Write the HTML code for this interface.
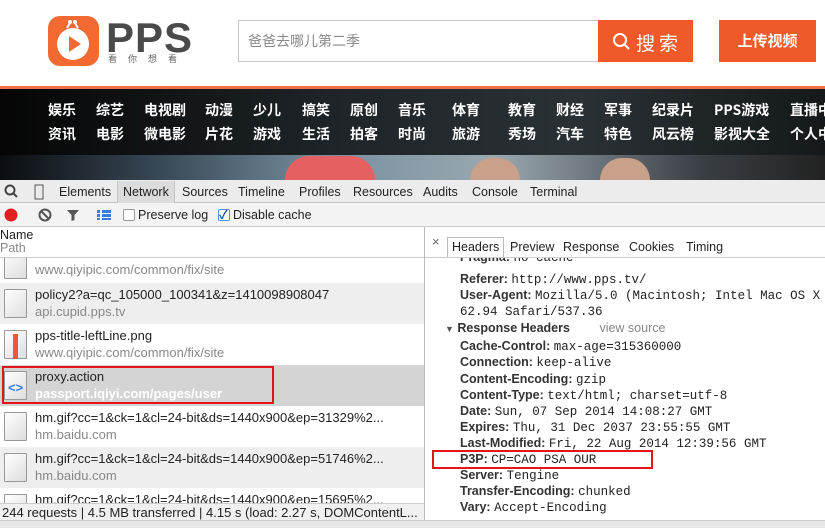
<!DOCTYPE html>
<html><head><meta charset="utf-8"><style>
*{margin:0;padding:0;box-sizing:border-box}
body{width:825px;height:528px;overflow:hidden;background:#fff;font-family:"Liberation Sans","Noto Sans CJK SC",sans-serif;position:relative}
.a{position:absolute}
.nav{position:absolute;left:0;top:89px;width:825px;height:66px;background:linear-gradient(90deg,#050505,#1e2428 40%,#2a3134 70%,#15191b);overflow:hidden}
.nav span{position:absolute;color:#fff;font-weight:bold;font-size:14px;font-family:"Noto Sans CJK SC",sans-serif;white-space:nowrap}
.tb{font-size:12.5px;color:#222}
.row{position:absolute;left:0;width:424px;height:41px;font-size:13px}
.row .t{position:absolute;left:35px;top:4px;color:#222;white-space:nowrap}
.row .p{position:absolute;left:35px;top:21px;color:#888;white-space:nowrap}
.row .ic{position:absolute;left:4px;top:6px;width:23px;height:29px;border:1px solid #999;background:linear-gradient(135deg,#fff,#ddd);border-radius:1px}
.h{position:absolute;left:460px;font-size:12.5px;white-space:nowrap;color:#222}
.h b{color:#333}
.h m{font-family:"Liberation Mono",monospace;font-size:12.5px}
</style></head><body>
<svg class="a" style="left:48px;top:14px" width="52" height="54"><rect x="0" y="2" width="51" height="50" rx="12" fill="#f26a32"/><circle cx="25" cy="30" r="16" fill="#fff"/><path d="M21 22 L33 30 L21 38Z" fill="#f26a32"/><line x1="19" y1="14" x2="22" y2="9" stroke="#fff" stroke-width="2"/><line x1="30" y1="14" x2="27" y2="9" stroke="#fff" stroke-width="2"/><circle cx="22" cy="8" r="2" fill="#fff"/><circle cx="27" cy="8" r="2" fill="#fff"/></svg>
<div class="a" style="left:106px;top:14px;font-size:42px;font-weight:bold;color:#4a4a4a;letter-spacing:1px;font-family:'Liberation Sans',sans-serif">PPS</div>
<div class="a" style="left:108px;top:52px;font-size:9px;color:#666;letter-spacing:11px;font-family:'Noto Sans CJK SC',sans-serif">看你想看</div>
<div class="a" style="left:238px;top:20px;width:362px;height:42px;border:1px solid #c8c8c8;border-right:none"></div>
<div class="a" style="left:248px;top:31px;font-size:14px;color:#888;font-family:'Noto Sans CJK SC',sans-serif">爸爸去哪儿第二季</div>
<div class="a" style="left:598px;top:20px;width:95px;height:42px;background:#f0592a"></div>
<svg class="a" style="left:612px;top:32px" width="20" height="20"><circle cx="8" cy="8" r="6" fill="none" stroke="#fff" stroke-width="2"/><line x1="12" y1="12" x2="17" y2="17" stroke="#fff" stroke-width="2"/></svg>
<div class="a" style="left:636px;top:29px;font-size:19px;color:#fff;letter-spacing:4px;font-family:'Noto Sans CJK SC',sans-serif">搜索</div>
<div class="a" style="left:719px;top:20px;width:97px;height:42px;background:#f0592a;color:#fff;font-size:15px;font-weight:bold;text-align:center;line-height:42px;font-family:'Noto Sans CJK SC',sans-serif">上传视频</div>
<div class="a" style="left:0;top:86px;width:825px;height:3px;background:#f0704a"></div>
<div class="nav">
<span style="left:48px;top:11px">娱乐</span><span style="left:96px;top:11px">综艺</span><span style="left:144px;top:11px">电视剧</span><span style="left:205px;top:11px">动漫</span><span style="left:253px;top:11px">少儿</span><span style="left:302px;top:11px">搞笑</span><span style="left:350px;top:11px">原创</span><span style="left:398px;top:11px">音乐</span><span style="left:452px;top:11px">体育</span><span style="left:508px;top:11px">教育</span><span style="left:556px;top:11px">财经</span><span style="left:604px;top:11px">军事</span><span style="left:652px;top:11px">纪录片</span><span style="left:714px;top:11px">PPS游戏</span><span style="left:790px;top:11px">直播中</span>
<span style="left:48px;top:35px">资讯</span><span style="left:96px;top:35px">电影</span><span style="left:144px;top:35px">微电影</span><span style="left:205px;top:35px">片花</span><span style="left:253px;top:35px">游戏</span><span style="left:302px;top:35px">生活</span><span style="left:350px;top:35px">拍客</span><span style="left:398px;top:35px">时尚</span><span style="left:452px;top:35px">旅游</span><span style="left:508px;top:35px">秀场</span><span style="left:556px;top:35px">汽车</span><span style="left:604px;top:35px">特色</span><span style="left:652px;top:35px">风云榜</span><span style="left:714px;top:35px">影视大全</span><span style="left:790px;top:35px">个人中</span>
</div>
<div class="a" style="left:0;top:155px;width:825px;height:25px;background:linear-gradient(90deg,#0a0d10,#3a4a58 20%,#7890a0 40%,#9aa8b0 60%,#3a3f44 85%,#222)"></div>
<div class="a" style="left:285px;top:156px;width:90px;height:24px;background:#e56060;border-radius:45px 45px 0 0"></div>
<div class="a" style="left:470px;top:158px;width:50px;height:22px;background:#c9a08a;border-radius:25px 25px 0 0"></div>
<div class="a" style="left:600px;top:158px;width:50px;height:22px;background:#c9a08a;border-radius:25px 25px 0 0"></div>
<div class="a" style="left:0;top:180px;width:825px;height:23px;background:#ececec;border-bottom:1px solid #c4c4c4"></div>
<svg class="a" style="left:4px;top:184px" width="40" height="16"><circle cx="6" cy="6" r="4.5" fill="none" stroke="#444" stroke-width="2"/><line x1="9" y1="9" x2="13" y2="13" stroke="#444" stroke-width="2"/><rect x="31" y="1" width="8" height="14" fill="none" stroke="#555"/></svg>
<div class="a" style="left:117px;top:181px;width:58px;height:22px;background:#dcdcdc;border-left:1px solid #c4c4c4;border-right:1px solid #c4c4c4"></div>
<div class="a tb" style="left:59px;top:185px">Elements</div>
<div class="a tb" style="left:123px;top:185px">Network</div>
<div class="a tb" style="left:182px;top:185px">Sources</div>
<div class="a tb" style="left:238px;top:185px">Timeline</div>
<div class="a tb" style="left:299px;top:185px">Profiles</div>
<div class="a tb" style="left:353px;top:185px">Resources</div>
<div class="a tb" style="left:423px;top:185px">Audits</div>
<div class="a tb" style="left:472px;top:185px">Console</div>
<div class="a tb" style="left:530px;top:185px">Terminal</div>
<div class="a" style="left:0;top:203px;width:825px;height:24px;background:#f3f3f3;border-bottom:1px solid #ccc"></div>
<svg class="a" style="left:3px;top:207px" width="110" height="16"><circle cx="8" cy="8" r="6.5" fill="#e02020"/><circle cx="42" cy="8" r="5.5" fill="none" stroke="#555" stroke-width="2"/><line x1="38" y1="4" x2="46" y2="12" stroke="#555" stroke-width="2"/><path d="M64 3h12l-4.5 5v5l-3 1v-6z" fill="#555"/><rect x="94" y="3" width="3" height="3" fill="#3a7be0"/><rect x="99" y="3" width="9" height="3" fill="#3a7be0"/><rect x="94" y="7" width="3" height="3" fill="#3a7be0"/><rect x="99" y="7" width="9" height="3" fill="#3a7be0"/><rect x="94" y="11" width="3" height="2" fill="#3a7be0"/><rect x="99" y="11" width="9" height="2" fill="#3a7be0"/></svg>
<div class="a" style="left:123px;top:209px;width:12px;height:12px;border:1px solid #999;border-radius:2px;background:#fff"></div>
<div class="a tb" style="left:138px;top:208px">Preserve log</div>
<div class="a" style="left:218px;top:209px;width:12px;height:12px;border:1px solid #5b8fd0;border-radius:2px;background:#fff;color:#1a4fa0;font-size:12px;line-height:10px;font-weight:bold">✓</div>
<div class="a tb" style="left:233px;top:208px">Disable cache</div>
<div class="a" style="left:0;top:228px;font-size:12.5px;color:#222">Name</div>
<div class="a" style="left:0;top:241px;font-size:12.5px;color:#888">Path</div>
<div class="a" style="left:0;top:257px;width:425px;height:1px;background:#ccc"></div>
<div class="row" style="top:258px;height:25px;overflow:hidden"><div class="ic" style="top:-8px"></div><div class="p" style="top:4px">www.qiyipic.com/common/fix/site</div></div>
<div class="row" style="top:283px;background:#eee"><div class="ic"></div><div class="t">policy2?a=qc_105000_100341&amp;z=1410098908047</div><div class="p">api.cupid.pps.tv</div></div>
<div class="row" style="top:324px"><div class="ic"><div style="position:absolute;left:8px;top:3px;width:5px;height:25px;background:#f05a28"></div></div><div class="t">pps-title-leftLine.png</div><div class="p">www.qiyipic.com/common/fix/site</div></div>
<div class="row" style="top:365px;background:#d4d4d4"><div class="ic"><div style="position:absolute;left:3px;top:8px;color:#3a7be0;font-weight:bold;font-size:13px">&lt;&gt;</div></div><div class="t">proxy.action</div><div class="p" style="color:#fff;font-weight:bold">passport.iqiyi.com/pages/user</div></div>
<div class="a" style="left:2px;top:366px;width:272px;height:38px;border:2px solid #e3141b"></div>
<div class="row" style="top:406px"><div class="ic"></div><div class="t">hm.gif?cc=1&amp;ck=1&amp;cl=24-bit&amp;ds=1440x900&amp;ep=31329%2...</div><div class="p">hm.baidu.com</div></div>
<div class="row" style="top:447px;background:#eee"><div class="ic"></div><div class="t">hm.gif?cc=1&amp;ck=1&amp;cl=24-bit&amp;ds=1440x900&amp;ep=51746%2...</div><div class="p">hm.baidu.com</div></div>
<div class="row" style="top:488px;height:15px;overflow:hidden"><div class="ic"></div><div class="t">hm.gif?cc=1&amp;ck=1&amp;cl=24-bit&amp;ds=1440x900&amp;ep=15695%2...</div></div>
<div class="a" style="left:0;top:503px;width:424px;height:18px;background:#f0f0f0;border-top:1px solid #ccc;font-size:13px;color:#222;padding:1px 0 0 2px;white-space:nowrap;overflow:hidden">244 requests | 4.5 MB transferred | 4.15 s (load: 2.27 s, DOMContentL...</div>
<div class="a" style="left:424px;top:227px;width:1px;height:293px;background:#bbb"></div>
<div class="a" style="left:0;top:520px;width:825px;height:8px;background:#e8e8e8;border-top:1px solid #ccc"></div>
<div class="a" style="left:432px;top:234px;font-size:13px;color:#666">×</div>
<div class="a" style="left:447px;top:237px;width:57px;height:21px;border:1px solid #bbb;border-bottom:none;background:#fff"></div>
<div class="a tb" style="left:452px;top:240px">Headers</div>
<div class="a tb" style="left:510px;top:240px">Preview</div>
<div class="a tb" style="left:563px;top:240px">Response</div>
<div class="a tb" style="left:629px;top:240px">Cookies</div>
<div class="a tb" style="left:686px;top:240px">Timing</div>
<div class="a" style="left:425px;top:257px;width:400px;height:1px;background:#ccc"></div>
<div style="position:absolute;left:425px;top:258px;width:400px;height:8px;overflow:hidden"><div class="h" style="left:35px;top:-8px"><b>Pragma:</b> <m>no-cache</m></div></div>
<div class="h" style="top:272px"><b>Referer:</b> <m>http://www.pps.tv/</m></div>
<div class="h" style="top:288px"><b>User-Agent:</b> <m>Mozilla/5.0 (Macintosh; Intel Mac OS X 1</m></div>
<div class="h" style="top:304px"><m>62.94 Safari/537.36</m></div>
<div class="h" style="left:445px;top:321px"><span style="font-size:9px;color:#555">▼</span> <b>Response Headers</b> <span style="color:#888;margin-left:26px">view source</span></div>
<div class="h" style="top:339px"><b>Cache-Control:</b> <m>max-age=315360000</m></div>
<div class="h" style="top:355px"><b>Connection:</b> <m>keep-alive</m></div>
<div class="h" style="top:372px"><b>Content-Encoding:</b> <m>gzip</m></div>
<div class="h" style="top:388px"><b>Content-Type:</b> <m>text/html; charset=utf-8</m></div>
<div class="h" style="top:404px"><b>Date:</b> <m>Sun, 07 Sep 2014 14:08:27 GMT</m></div>
<div class="h" style="top:420px"><b>Expires:</b> <m>Thu, 31 Dec 2037 23:55:55 GMT</m></div>
<div class="h" style="top:436px"><b>Last-Modified:</b> <m>Fri, 22 Aug 2014 12:39:56 GMT</m></div>
<div class="h" style="top:452px"><b>P3P:</b> <m>CP=CAO PSA OUR</m></div>
<div class="a" style="left:432px;top:450px;width:221px;height:19px;border:2px solid #e3141b"></div>
<div class="h" style="top:468px"><b>Server:</b> <m>Tengine</m></div>
<div class="h" style="top:484px"><b>Transfer-Encoding:</b> <m>chunked</m></div>
<div class="h" style="top:500px"><b>Vary:</b> <m>Accept-Encoding</m></div>
</body></html>
